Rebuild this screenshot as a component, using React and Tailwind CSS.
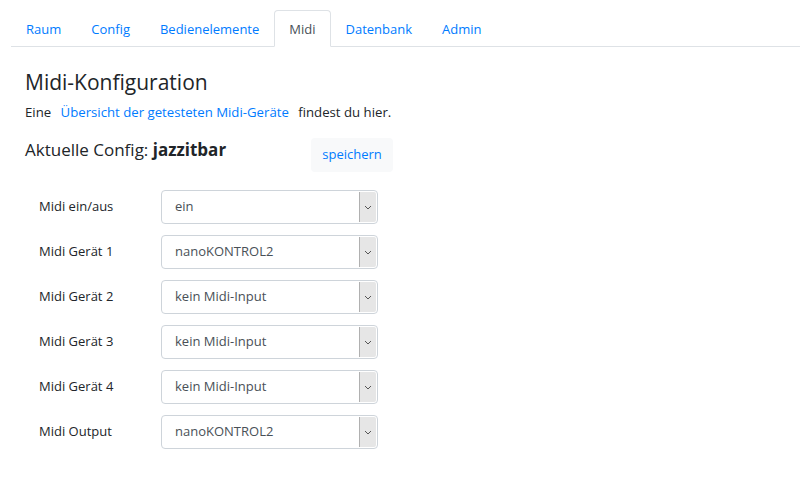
import React from "react";

const tabs = ["Raum", "Config", "Bedienelemente", "Midi", "Datenbank", "Admin"];
const rows = [
  ["Midi ein/aus", "ein"],
  ["Midi Gerät 1", "nanoKONTROL2"],
  ["Midi Gerät 2", "kein Midi-Input"],
  ["Midi Gerät 3", "kein Midi-Input"],
  ["Midi Gerät 4", "kein Midi-Input"],
  ["Midi Output", "nanoKONTROL2"],
];

function Select({ value }) {
  return (
    <div className="flex h-[34px] w-[217px] items-stretch rounded-[4px] border border-[#ced4da] bg-white">
      <div className="flex flex-1 items-center pl-[13px] text-[13px] text-[#495057]">{value}</div>
      <div className="my-[1px] mr-[1px] flex w-[17px] items-center justify-center rounded-r-[2px] border-l border-[#b0b0b0] bg-[#e6e6e6]">
        <svg width="8" height="5" viewBox="0 0 8 5">
          <path d="M1 1 L4 4 L7 1" fill="none" stroke="#555" strokeWidth="1" />
        </svg>
      </div>
    </div>
  );
}

export default function App() {
  return (
    <div className="h-[499px] w-[812px] bg-white text-[#212529]" style={{ fontFamily: '"Open Sans", "Noto Sans", sans-serif' }}>
      <div className="ml-[11px] mr-[12px] pt-[10px]">
        <div className="flex border-b border-[#dee2e6]">
          {tabs.map((t) => (
            <div
              key={t}
              className={
                t === "Midi"
                  ? "-mb-px rounded-t-[4px] border border-[#dee2e6] border-b-white bg-white px-[14px] pt-[8px] pb-[6px] text-[13px] leading-[20px] text-[#495057]"
                  : "border border-transparent px-[14px] pt-[8px] pb-[6px] text-[13px] leading-[20px] text-[#007bff]"
              }
            >
              {t}
            </div>
          ))}
        </div>
      </div>
      <div className="px-[25px] pt-[22px]">
        <h2 className="text-[21px] leading-[26px] font-normal">Midi-Konfiguration</h2>
        <p className="mt-[8px] text-[13.2px] leading-[18px]">
          Eine <span className="ml-[6px] mr-[6px] text-[#007bff]">Übersicht der getesteten Midi-Geräte</span> findest du hier.
        </p>
        <div className="mt-[16px] flex items-start">
          <div className="mt-[1px] w-[286px] text-[17px] leading-[24px]">
            Aktuelle Config: <span className="font-bold">jazzitbar</span>
          </div>
          <div className="mt-[1px] flex h-[34px] w-[82px] items-center justify-center rounded-[4px] bg-[#f8f9fa] text-[13px] text-[#007bff]">
            speichern
          </div>
        </div>
        <div className="mt-[18px] flex flex-col gap-[11px]">
          {rows.map(([l, v]) => (
            <div key={l} className="flex items-center">
              <div className="w-[136px] pl-[14px] text-[13px]">{l}</div>
              <Select value={v} />
            </div>
          ))}
        </div>
      </div>
    </div>
  );
}
